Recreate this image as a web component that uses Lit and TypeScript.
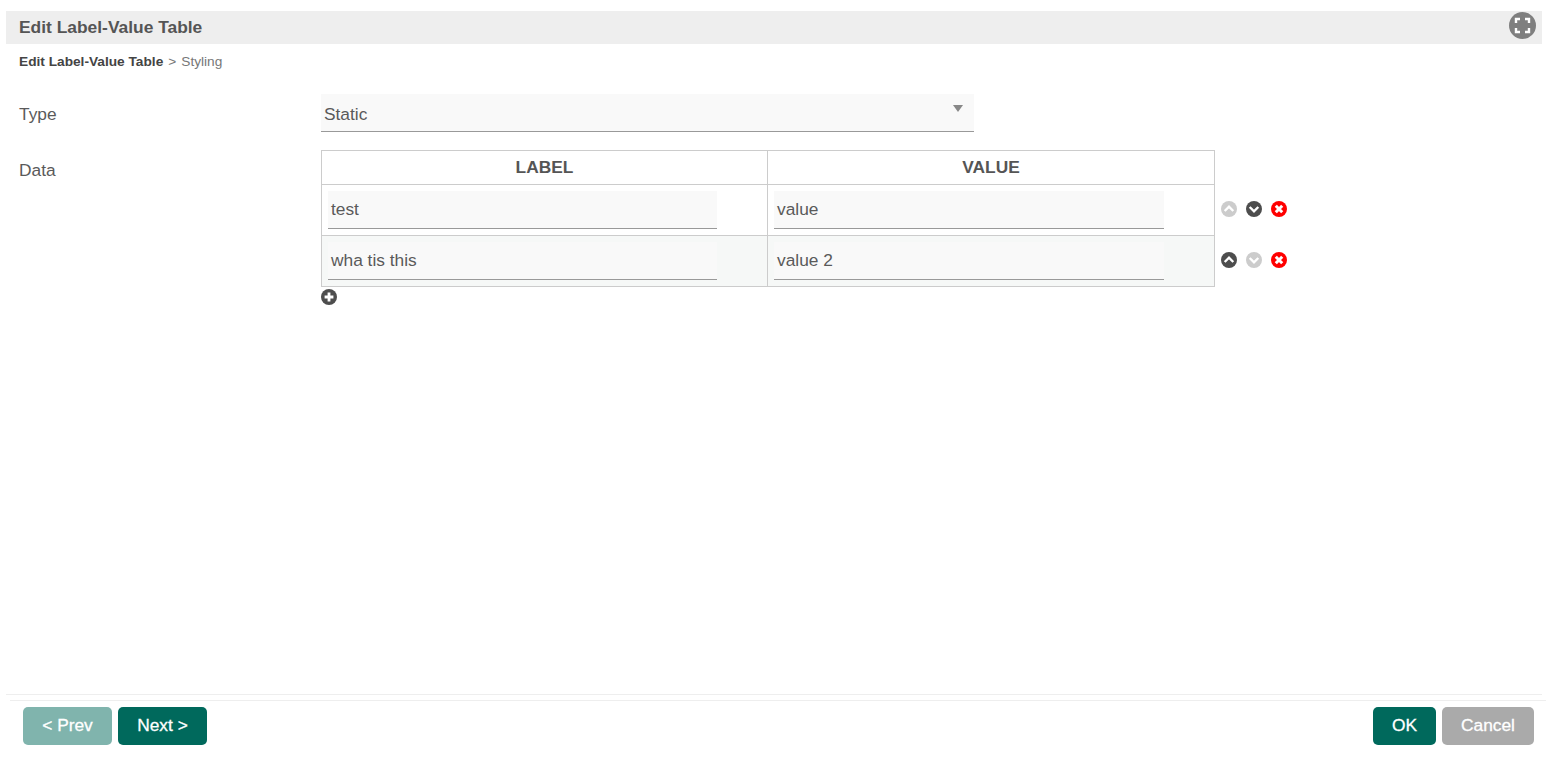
import { LitElement, html, css, svg } from "lit";
import { customElement } from "lit/decorators.js";

const upIcon = (cls: string) => html`<svg class="ico ${cls}" viewBox="0 0 16 16"><circle cx="8" cy="8" r="8" fill="currentColor"/><path d="M3.7 10 8 5.7l4.3 4.3" fill="none" stroke="#fff" stroke-width="2.4"/></svg>`;
const downIcon = (cls: string) => html`<svg class="ico ${cls}" viewBox="0 0 16 16"><circle cx="8" cy="8" r="8" fill="currentColor"/><path d="M3.7 6 8 10.3 12.3 6" fill="none" stroke="#fff" stroke-width="2.4"/></svg>`;
const delIcon = html`<svg class="ico del" viewBox="0 0 16 16"><circle cx="8" cy="8" r="8" fill="currentColor"/><path d="M4.8 4.8l6.4 6.4M11.2 4.8l-6.4 6.4" fill="none" stroke="#fff" stroke-width="3"/></svg>`;
const corners = svg`<path d="M8 12V8h4M17 8h4v4M21 17v4h-4M12 21H8v-4" fill="none" stroke="#fff" stroke-width="2.4"/>`;

@customElement("app-root")
export class AppRoot extends LitElement {
  static styles = css`
    :host { display: flex; flex-direction: column; height: 757px; background: #fff; overflow: hidden;
      font-family: "Liberation Sans", Arial, sans-serif; color: #5a5a5a; font-size: 17.33px; }
    .head { margin: 11px 6px 0; height: 33px; background: #eee; display: flex; align-items: center;
      justify-content: space-between; padding: 0 6px 0 13px; flex: none; }
    .head h1 { margin: 0; font-size: 17.4px; font-weight: 700; color: #555; }
    .full { width: 28px; height: 28px; display: block; margin-top: -5px; }
    .crumb { margin: 10px 0 0 19px; font-size: 13.7px; line-height: 16px; color: #777; height: 16px; display: flex; }
    .crumb b { color: #444; }
    .sep { margin: 0 5px; }
    .main { flex: 1; padding: 24px 0 0 19px; }
    .row { display: flex; }
    .lab { width: 302px; flex: none; line-height: 40px; }
    .select { width: 653px; box-sizing: border-box; height: 38px; background: #f9f9f9; border-bottom: 1px solid #999;
      display: flex; justify-content: space-between; padding: 0 11px 0 3px; line-height: 40px; }
    .arrow { width: 0; height: 0; border: 5px solid transparent; border-top: 7px solid #888; border-bottom: 0; margin-top: 11px; }
    .data { margin-top: 16px; }
    table { border-collapse: collapse; width: 894px; table-layout: fixed; }
    th, td { border: 1px solid #ccc; padding: 0; }
    th { height: 33px; font-size: 17.33px; font-weight: 700; color: #555; }
    td { height: 50px; padding: 0 0 0 6px; vertical-align: middle; }
    tr.alt td { background: #f6f8f7; }
    .input { width: 389px; height: 38px; box-sizing: border-box; background: #f9f9f9; border-bottom: 1px solid #999;
      padding-left: 3px; line-height: 36px; }
    td + td .input { width: 390px; }
    .actions { display: flex; flex-direction: column; margin: 51px 0 0 6px; gap: 35px; }
    .set { display: flex; gap: 9px; height: 16px; }
    .ico { width: 16px; height: 16px; display: block; color: #4d4d4d; }
    .off { color: #ccc; }
    .del { color: #f00; }
    .add { margin-top: 2px; }
    .rule { height: 1px; background: #eee; flex: none; }
    .r1 { margin: 0 6px; }
    .r2 { margin: 5px 2px 0 10px; }
    .foot { display: flex; justify-content: space-between; padding: 6px 14px 12px 23px; flex: none; }
    .group { display: flex; gap: 6px; }
    button { height: 38px; border: 0; border-radius: 5px; background: #00695c; color: #fff; padding: 0 0 2px;
      font: 400 17.33px "Liberation Sans", Arial, sans-serif; -webkit-text-stroke: 0.3px #fff; }
    .prev { width: 89px; background: #80b4ad; }
    .next { width: 89px; }
    .ok { width: 63px; }
    .cancel { width: 92px; background: #aaa; }
  `;

  render() {
    return html`
      <div class="head">
        <h1>Edit Label-Value Table</h1>
        <svg class="full" viewBox="0 0 28 28"><circle cx="14.5" cy="14.5" r="13.5" fill="#7f7f7f"/>${corners}</svg>
      </div>
      <div class="crumb"><b>Edit Label-Value Table</b><span class="sep">&gt;</span><span>Styling</span></div>
      <div class="main">
        <div class="row">
          <div class="lab">Type</div>
          <div class="select"><span>Static</span><span class="arrow"></span></div>
        </div>
        <div class="row data">
          <div class="lab">Data</div>
          <div>
            <table>
              <colgroup><col style="width:446px" /><col /></colgroup>
              <thead><tr><th>LABEL</th><th>VALUE</th></tr></thead>
              <tbody>
                <tr><td><div class="input">test</div></td><td><div class="input">value</div></td></tr>
                <tr class="alt"><td><div class="input">wha tis this</div></td><td><div class="input">value 2</div></td></tr>
              </tbody>
            </table>
            <svg class="ico add" viewBox="0 0 16 16"><circle cx="8" cy="8" r="8" fill="currentColor"/><path d="M8 3.6v8.8M3.6 8h8.8" stroke="#fff" stroke-width="2.8"/></svg>
          </div>
          <div class="actions">
            <div class="set">${upIcon("off")}${downIcon("")}${delIcon}</div>
            <div class="set">${upIcon("")}${downIcon("off")}${delIcon}</div>
          </div>
        </div>
      </div>
      <div class="rule r1"></div>
      <div class="rule r2"></div>
      <div class="foot">
        <div class="group"><button class="prev">&lt; Prev</button><button class="next">Next &gt;</button></div>
        <div class="group"><button class="ok">OK</button><button class="cancel">Cancel</button></div>
      </div>
    `;
  }
}
